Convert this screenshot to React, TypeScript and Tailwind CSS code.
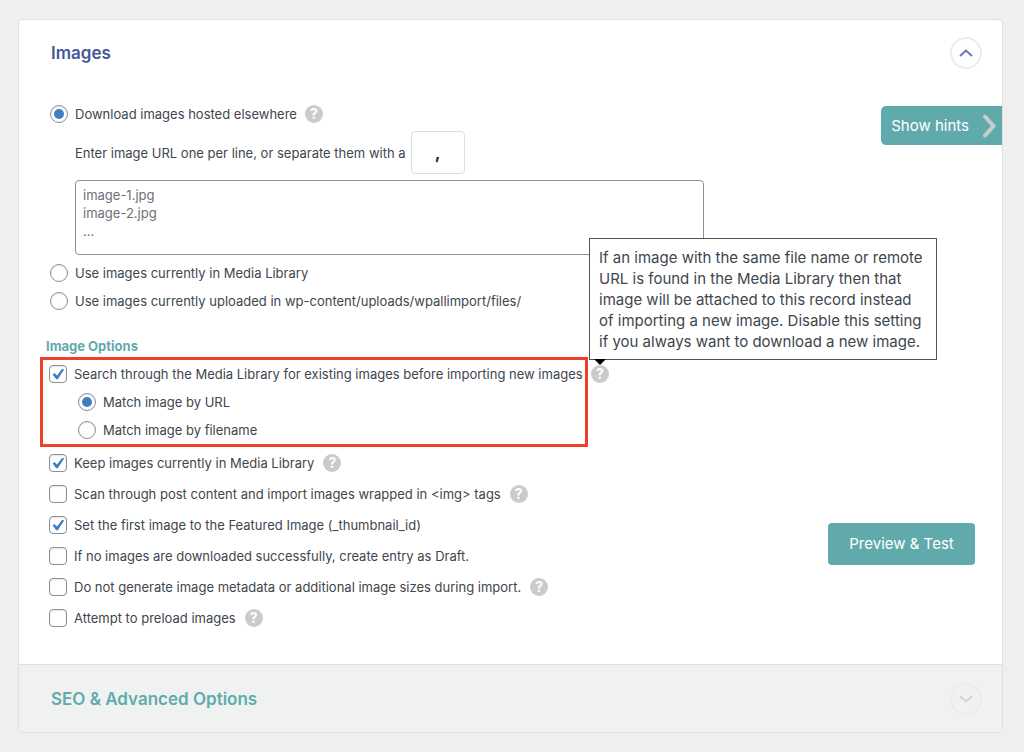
import { useState } from "react";
import type { ReactNode } from "react";

function Chevron({ direction, className }: { direction: "up" | "down"; className: string }) {
  return (
    <svg viewBox="0 0 14 8" className={className} fill="none" stroke="currentColor" strokeWidth="2" aria-hidden="true">
      <path d={direction === "up" ? "M1 7 7 1.6 13 7" : "M1 1 7 6.4 13 1"} />
    </svg>
  );
}

function Help({ label, children }: { label: string; children?: ReactNode }) {
  return (
    <span className="relative flex shrink-0">
      <button
        type="button"
        aria-label={label}
        className="flex size-[18px] items-center justify-center rounded-full bg-[#cbcbcb] text-sm leading-none font-bold text-white"
      >
        ?
      </button>
      {children}
    </span>
  );
}

function Radio({ id, name, label, defaultChecked }: { id: string; name: string; label: string; defaultChecked?: boolean }) {
  return (
    <>
      <input
        id={id}
        name={name}
        type="radio"
        defaultChecked={defaultChecked}
        className="flex size-[18px] shrink-0 appearance-none items-center justify-center rounded-full border border-[#8c8f94] bg-white shadow-[inset_0_1px_2px_rgba(0,0,0,0.1)] before:size-[10px] before:rounded-full checked:before:bg-[#3f7fc1]"
      />
      <label htmlFor={id} className="ml-[7px] whitespace-nowrap">
        {label}
      </label>
    </>
  );
}

function Check({ id, label, defaultChecked }: { id: string; label: string; defaultChecked?: boolean }) {
  return (
    <>
      <span className="grid size-[18px] shrink-0">
        <input
          id={id}
          type="checkbox"
          defaultChecked={defaultChecked}
          className="peer col-start-1 row-start-1 size-[18px] appearance-none rounded-[4px] border border-[#8c8f94] bg-white shadow-[inset_0_1px_2px_rgba(0,0,0,0.1)]"
        />
        <svg
          viewBox="0 0 18 18"
          aria-hidden="true"
          className="pointer-events-none invisible col-start-1 row-start-1 size-[18px] text-[#3f7fc1] peer-checked:visible"
        >
          <path d="M3.6 9.6 5.4 8.1 8 10.4 13 4 15.3 4.2 8.8 14.2 7.2 14.2Z" fill="currentColor" />
        </svg>
      </span>
      <label htmlFor={id} className="ml-[7px] whitespace-nowrap">
        {label}
      </label>
    </>
  );
}

const options = [
  { id: "keep", label: "Keep images currently in Media Library", checked: true, help: true },
  { id: "scan", label: "Scan through post content and import images wrapped in <img> tags", checked: false, help: true },
  { id: "featured", label: "Set the first image to the Featured Image (_thumbnail_id)", checked: true, help: false },
  { id: "draft", label: "If no images are downloaded successfully, create entry as Draft.", checked: false, help: false },
  { id: "metadata", label: "Do not generate image metadata or additional image sizes during import.", checked: false, help: true },
  { id: "preload", label: "Attempt to preload images", checked: false, help: true },
];

export default function App() {
  const [separator, setSeparator] = useState(",");

  return (
    <div className="min-h-screen bg-[#efefef] py-[19px] pr-[21px] pl-[18px] font-['Inter',sans-serif] text-[13px] leading-5 text-[#40464d]">
      <main className="overflow-hidden rounded-[4px] border border-[#dfdfdf] bg-white">
        <header className="flex items-center justify-between pt-[17px] pr-5 pl-8">
          <h2 className="text-[17px] leading-8 font-semibold text-[#46569b]">Images</h2>
          <button
            type="button"
            aria-label="Collapse images"
            className="flex size-8 items-center justify-center rounded-full border-2 border-[#ececec] text-[#6b76b3]"
          >
            <Chevron direction="up" className="h-2 w-3.5" />
          </button>
        </header>

        <div className="flex justify-between pt-[33px] pb-[31px]">
          <section className="min-w-0 flex-1 pl-[21px]">
            <div className="flex h-6 items-center pl-[10px]">
              <Radio id="download" name="source" label="Download images hosted elsewhere" defaultChecked />
              <span className="ml-2 flex">
                <Help label="About downloading images" />
              </span>
            </div>

            <div className="mt-[5px] flex items-center pl-[35px]">
              <label htmlFor="separator">Enter image URL one per line, or separate them with a</label>
              <input
                id="separator"
                type="text"
                value={separator}
                onChange={(e) => setSeparator(e.target.value)}
                className="ml-[5px] h-[43px] w-[54px] rounded-[4px] border border-[#dedede] bg-white text-center text-lg font-semibold text-[#1d1d1d]"
              />
            </div>

            <div className="mt-[6px] pl-[35px]">
              <textarea
                aria-label="Image URLs"
                placeholder={"image-1.jpg\nimage-2.jpg\n..."}
                className="block h-[75px] w-full max-w-[629px] resize-none rounded-[4px] border border-[#8c8f94] px-[7px] py-[5px] leading-[18px] placeholder:text-[#6d7176]"
              />
            </div>

            <div className="mt-1 flex h-7 items-center pl-[10px]">
              <Radio id="library" name="source" label="Use images currently in Media Library" />
            </div>
            <div className="flex h-7 items-center pl-[10px]">
              <Radio id="uploads" name="source" label="Use images currently uploaded in wp-content/uploads/wpallimport/files/" />
            </div>

            <h3 className="mt-5 pl-[6px] leading-[22px] font-bold text-[#5fabad]">Image Options</h3>

            <div className="flex">
              <div className="w-[548px] border-3 border-[#ee4028] pl-[6px]">
                <div className="flex h-7 items-center">
                  <Check
                    id="search"
                    label="Search through the Media Library for existing images before importing new images"
                    defaultChecked
                  />
                </div>
                <div className="flex h-7 items-center pl-[29px]">
                  <Radio id="by-url" name="match" label="Match image by URL" defaultChecked />
                </div>
                <div className="flex h-7 items-center pl-[29px]">
                  <Radio id="by-filename" name="match" label="Match image by filename" />
                </div>
              </div>
              <div className="ml-[3px] flex h-[34px] items-center">
                <Help label="About searching the Media Library">
                  <span
                    role="tooltip"
                    className="absolute bottom-[23px] left-[-2px] w-[348px] border border-[#50555b] bg-white px-[9px] pt-2 pb-[7px] text-[15px] leading-[21px]"
                  >
                    If an image with the same file name or remote URL is found in the Media Library then that image will be
                    attached to this record instead of importing a new image. Disable this setting if you always want to
                    download a new image.
                    <svg viewBox="0 0 12 6" aria-hidden="true" className="absolute top-full left-1 h-[6px] w-3">
                      <path d="M0 0H12L6 6Z" fill="#000" />
                    </svg>
                  </span>
                </Help>
              </div>
            </div>

            <ul className="pl-[9px]">
              {options.map((option) => (
                <li key={option.id} className="flex h-[31px] items-center">
                  <Check id={option.id} label={option.label} defaultChecked={option.checked} />
                  {option.help && (
                    <span className="ml-[9px] flex">
                      <Help label={"About: " + option.label} />
                    </span>
                  )}
                </li>
              ))}
            </ul>
          </section>

          <aside className="flex flex-col items-end justify-between pt-1 pb-[68px]">
            <button
              type="button"
              className="flex h-[39px] items-center gap-[13px] rounded-l-[5px] bg-[#61aaac] pr-[5px] pl-[10px] text-[15px] whitespace-nowrap text-white"
            >
              Show hints
              <svg viewBox="0 0 15 24" className="h-6 w-[15px]" fill="none" stroke="#c9cccc" strokeWidth="4" aria-hidden="true">
                <path d="M3 2.5 11.5 12 3 21.5" strokeLinecap="round" strokeLinejoin="miter" />
              </svg>
            </button>
            <button
              type="button"
              className="mr-[27px] h-[42px] w-[147px] rounded-[4px] bg-[#61aaac] text-[15px] whitespace-nowrap text-white"
            >
              Preview &amp; Test
            </button>
          </aside>
        </div>

        <footer className="flex h-[68px] items-center justify-between border-t border-[#dfe0e0] bg-[#f0f2f1] pr-5 pl-8">
          <h2 className="text-[17px] leading-8 font-semibold text-[#5fabad]">SEO &amp; Advanced Options</h2>
          <button
            type="button"
            aria-label="Expand SEO and advanced options"
            className="flex size-8 items-center justify-center rounded-full border-2 border-[#ebebeb] text-[#d3d5d4]"
          >
            <Chevron direction="down" className="h-2 w-3.5" />
          </button>
        </footer>
      </main>
    </div>
  );
}
